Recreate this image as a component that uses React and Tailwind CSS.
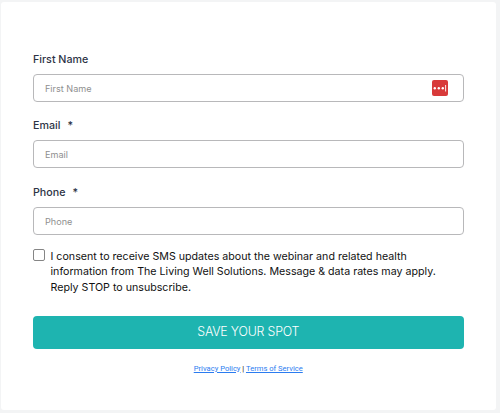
function Field({ label, required, children, className = "" }) {
  return (
    <div className={`flex flex-col gap-[6px] ${className}`}>
      <label className="flex h-4 items-center gap-[7px] text-[10.7px] font-medium leading-4 text-[#2c3345]">
        <span>{label}</span>
        {required && <span>*</span>}
      </label>
      <div className="flex h-7 items-center rounded-[4px] border border-[#b8b8ba] bg-white pl-[11px] pr-[15px]">
        <input
          className="min-w-0 flex-1 bg-transparent pt-px text-[9.1px] leading-4 outline-none placeholder:text-[#8f8f8f]"
          placeholder={label}
        />
        {children}
      </div>
    </div>
  );
}

function PasswordIcon() {
  return (
    <svg width="16" height="16" viewBox="0 0 16 16" className="shrink-0">
      <rect width="16" height="16" rx="2" fill="#d83a3a" />
      <circle cx="2.8" cy="8.2" r="1.2" fill="#fff" />
      <circle cx="6.8" cy="8.2" r="1.2" fill="#fff" />
      <circle cx="10.8" cy="8.2" r="1.2" fill="#fff" />
      <rect x="13.2" y="5" width="0.9" height="6.5" fill="#fff" />
    </svg>
  );
}

export default function App() {
  return (
    <div className="h-[413px] w-[500px] bg-[#f3f4f5] pl-px pt-[2px] font-['Inter',sans-serif]">
      <form className="flex h-[408px] w-[494.5px] flex-col rounded-[3px] bg-white pl-8 pr-8 pt-[50px]">
        <Field label="First Name">
          <PasswordIcon />
        </Field>
        <Field label="Email" required className="mt-[16px]" />
        <Field label="Phone" required className="mt-[17px]" />
        <div className="mt-[14px] flex gap-[5.5px]">
          <input
            type="checkbox"
            className="h-3 w-3 shrink-0 appearance-none rounded-[2px] border border-[#858585] bg-white"
          />
          <p className="whitespace-nowrap text-[10.66px] leading-[15.4px] text-[#111]">
            I consent to receive SMS updates about the webinar and related health
            <br />
            information from The Living Well Solutions. Message &amp; data rates may apply.
            <br />
            Reply STOP to unsubscribe.
          </p>
        </div>
        <button
          type="button"
          className="mt-[20.8px] h-[32.5px] rounded-[4px] bg-[#1eb4b0] text-[12.4px] font-[350] leading-8 tracking-[-0.2px] text-white"
        >
          SAVE YOUR SPOT
        </button>
        <p className="mt-3 text-center font-['Roboto',sans-serif] text-[7.6px] leading-4 text-black">
          <a className="text-[#2b7cf0] underline">Privacy Policy</a> |{" "}
          <a className="text-[#2b7cf0] underline">Terms of Service</a>
        </p>
      </form>
    </div>
  );
}
